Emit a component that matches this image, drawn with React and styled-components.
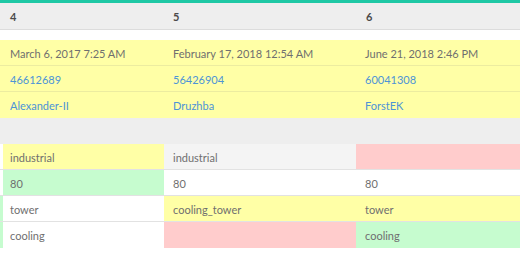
import React from "react";
import styled, { createGlobalStyle } from "styled-components";

const Global = createGlobalStyle`
  html, body { margin: 0; padding: 0; background: #ffffff; }
  body { font-family: Lato, "Open Sans", sans-serif; }
`;

const C = {
  yellow: "#ffffa6",
  green: "#c6fccf",
  red: "#ffcccc",
  gray: "#f4f4f4",
  white: "#ffffff",
};

const Page = styled.div`
  width: 520px;
  height: 258px;
  overflow: hidden;
  background: #fff;
`;

const TopBar = styled.div`
  height: 3px;
  background: #1fc8a5;
`;

const Grid = styled.div`
  display: grid;
  grid-template-columns: 3px 161px 192px 164px;
`;

const HeadCell = styled.div`
  height: 26px;
  background: #eeeeee;
  border-bottom: 1px solid #dcdcdc;
  display: flex;
  align-items: center;
  padding-left: ${(p) => p.$pad || 0}px;
  font-size: 11px;
  font-weight: 700;
  color: #4a4a4a;
`;

const Spacer = styled.div`
  grid-column: 1 / -1;
  height: ${(p) => p.$h}px;
  background: ${(p) => p.$bg};
`;

const Cell = styled.div`
  height: 26px;
  box-sizing: border-box;
  background: ${(p) => p.$bg};
  border-bottom: 1px solid ${(p) => p.$line};
  display: flex;
  align-items: center;
  padding-left: ${(p) => p.$pad || 0}px;
  padding-top: 1px;
  font-size: 11px;
  color: ${(p) => (p.$link ? "#4d94d6" : "#6f6f6f")};
  white-space: nowrap;
  overflow: hidden;
`;

const pads = [0, 7, 9, 9];

const topRows = [
  { link: false, vals: ["March 6, 2017 7:25 AM", "February 17, 2018 12:54 AM", "June 21, 2018 2:46 PM"] },
  { link: true, vals: ["46612689", "56426904", "60041308"] },
  { link: true, vals: ["Alexander-II", "Druzhba", "ForstEK"] },
];

const bottomRows = [
  { edge: C.white, cells: [["industrial", C.yellow], ["industrial", C.gray], ["", C.red]] },
  { edge: C.white, cells: [["80", C.green], ["80", C.white], ["80", C.white]] },
  { edge: C.green, cells: [["tower", C.white], ["cooling_tower", C.yellow], ["tower", C.yellow]] },
  { edge: C.green, cells: [["cooling", C.white], ["", C.red], ["cooling", C.green]] },
];

export default function App() {
  return (
    <Page>
      <Global />
      <TopBar />
      <Grid>
        <HeadCell />
        <HeadCell $pad={7}>4</HeadCell>
        <HeadCell $pad={9}>5</HeadCell>
        <HeadCell $pad={10}>6</HeadCell>
        <Spacer $h={10} $bg="#ffffff" />
        {topRows.map((r, i) =>
          [null, ...r.vals].map((v, j) => (
            <Cell
              key={`t${i}-${j}`}
              $bg={C.yellow}
              $line={i < 2 ? "#ececa0" : C.yellow}
              $pad={pads[j]}
              $link={r.link}
            >
              {v}
            </Cell>
          ))
        )}
        <Spacer $h={26} $bg="#eeeeee" />
        {bottomRows.map((r, i) =>
          [["", r.edge], ...r.cells].map(([v, bg], j) => (
            <Cell key={`b${i}-${j}`} $bg={bg} $line={i < 3 ? "#e2e2e2" : bg} $pad={pads[j]}>
              {v}
            </Cell>
          ))
        )}
      </Grid>
    </Page>
  );
}
